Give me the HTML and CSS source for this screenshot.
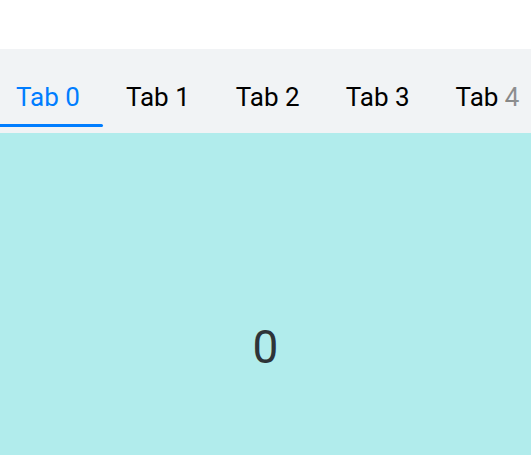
FILE: index.html
```html
<!DOCTYPE html>
<html>
<head>
<meta charset="utf-8">
<link rel="stylesheet" href="styles.css">
</head>
<body>
<div class="page">
  <div class="tabbar">
    <div class="tabs">
      <div class="tab active"><span class="label">Tab 0</span><span class="indicator"></span></div>
      <div class="tab"><span class="label">Tab 1</span><span class="indicator"></span></div>
      <div class="tab"><span class="label">Tab 2</span><span class="indicator"></span></div>
      <div class="tab"><span class="label">Tab 3</span><span class="indicator"></span></div>
      <div class="tab"><span class="label">Tab 4</span><span class="indicator"></span></div>
      <div class="tab"><span class="label">Tab 5</span><span class="indicator"></span></div>
    </div>
    <div class="fade"></div>
  </div>
  <div class="content">
    <span class="number">0</span>
  </div>
</div>
</body>
</html>
```

FILE: styles.css
```css
html, body {
  margin: 0;
  padding: 0;
  background: #ffffff;
  overflow: hidden;
  height: 100%;
}

.page {
  padding-top: 49px;
  font-family: Roboto, "Noto Sans", sans-serif;
}

.tabbar {
  position: relative;
  height: 84px;
  background: #f1f3f5;
  overflow: hidden;
}

.tabs {
  display: flex;
  margin-left: -7px;
}

.tab {
  flex: none;
  display: flex;
  flex-direction: column;
  align-items: stretch;
  padding-top: 33px;
}

.label {
  padding: 0 23px;
  font-size: 26px;
  line-height: 30px;
  color: #000000;
  white-space: nowrap;
}

.indicator {
  margin-top: 12px;
  height: 3px;
  border-radius: 0 2px 2px 0;
  background: transparent;
}

.tab.active .label {
  color: #007dff;
}

.tab.active .indicator {
  background: #007dff;
}

.fade {
  position: absolute;
  top: 0;
  right: 0;
  width: 29px;
  height: 100%;
  background: linear-gradient(to right, rgba(241, 243, 245, 0) 0%, rgba(241, 243, 245, 0.55) 15%, rgba(241, 243, 245, 0.65) 100%);
}

.content {
  height: 427px;
  background: #b1ecec;
  display: flex;
  align-items: center;
  justify-content: center;
}

.number {
  font-size: 46px;
  color: #2e3438;
  line-height: 1;
}
```
